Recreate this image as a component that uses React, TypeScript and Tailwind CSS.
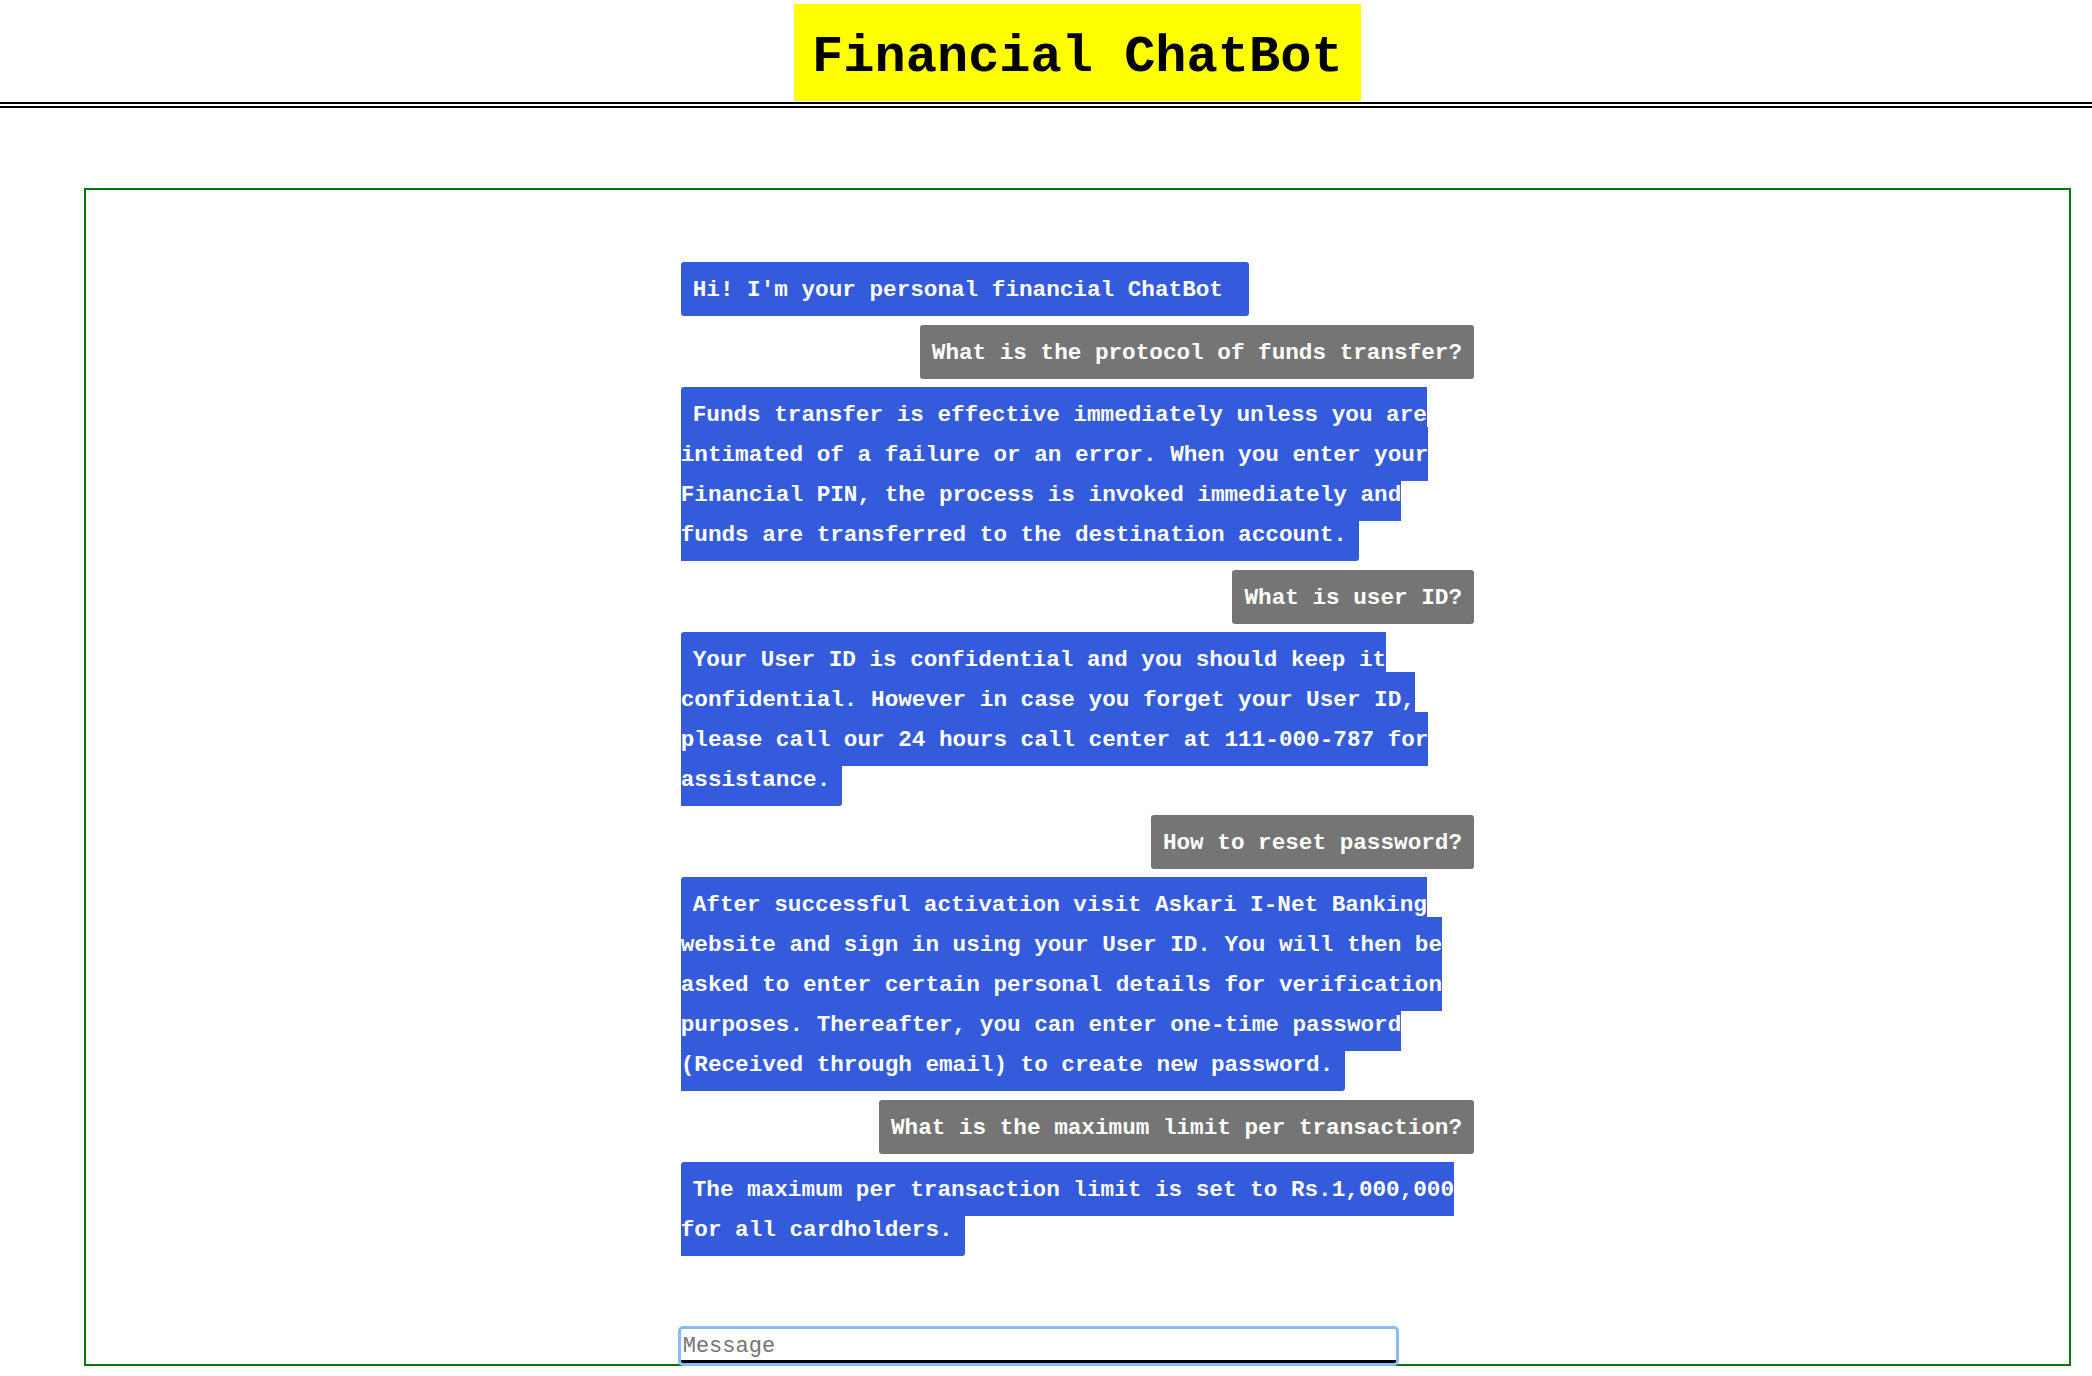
import React from "react";

type Msg = { from: "bot" | "user"; text: string };

const messages: Msg[] = [
  { from: "bot", text: "Hi! I'm your personal financial ChatBot\u00a0" },
  { from: "user", text: "What is the protocol of funds transfer?" },
  {
    from: "bot",
    text: "Funds transfer is effective immediately unless you are intimated of a failure or an error. When you enter your Financial PIN, the process is invoked immediately and funds are transferred to the destination account.",
  },
  { from: "user", text: "What is user ID?" },
  {
    from: "bot",
    text: "Your User ID is confidential and you should keep it confidential. However in case you forget your User ID, please call our 24 hours call center at 111-000-787 for assistance.",
  },
  { from: "user", text: "How to reset password?" },
  {
    from: "bot",
    text: "After successful activation visit Askari I-Net Banking website and sign in using your User ID. You will then be asked to enter certain personal details for verification purposes. Thereafter, you can enter one-time password (Received through email) to create new password.",
  },
  { from: "user", text: "What is the maximum limit per transaction?" },
  {
    from: "bot",
    text: "The maximum per transaction limit is set to Rs.1,000,000 for all cardholders.",
  },
];

const Bubble: React.FC<{ msg: Msg }> = ({ msg }) => {
  const isBot = msg.from === "bot";
  return (
    <div className={isBot ? "leading-[40px]" : "text-right leading-[40px]"}>
      <span
        className={
          isBot
            ? "rounded-[3px] bg-[#335bdc] px-[12px] pb-[13px] pt-[15px] text-white"
            : "rounded-[3px] bg-[#757575] px-[12px] pb-[13px] pt-[15px] text-white"
        }
      >
        {msg.text}
      </span>
    </div>
  );
};

const App: React.FC = () => {
  return (
    <div className="min-h-screen bg-white font-['Liberation_Mono','Courier_New',monospace] text-black">
      {/* header */}
      <div className="border-b-[6px] border-double border-black pb-[1px] pt-[4px]">
        <div className="ml-[4%] flex w-[95%] justify-center">
          <h1 className="bg-[#ffff00] px-[18px] pb-[14px] pt-[24px] text-[52px] font-bold leading-[59px]">
            Financial ChatBot
          </h1>
        </div>
      </div>

      {/* chat box */}
      <div className="ml-[4%] mt-[80px] h-[1178px] w-[95%] border-2 border-[#007a00]">
        <div className="mx-auto flex w-[40%] flex-col gap-[22.5px] pt-[80px] text-[22.667px] font-bold">
          {messages.map((m, i) => (
            <Bubble key={i} msg={m} />
          ))}
          <input
            autoFocus
            placeholder="Message"
            className="mt-[56px] h-[34px] w-[715px] self-start rounded-[2px] border-0 border-b-[3px] border-black bg-white pl-[2px] pt-[4px] text-[22px] font-normal text-black caret-black outline-none ring-[3px] ring-[#8cbaf3] placeholder:text-[#757575]"
          />
        </div>
      </div>
    </div>
  );
};

export default App;
